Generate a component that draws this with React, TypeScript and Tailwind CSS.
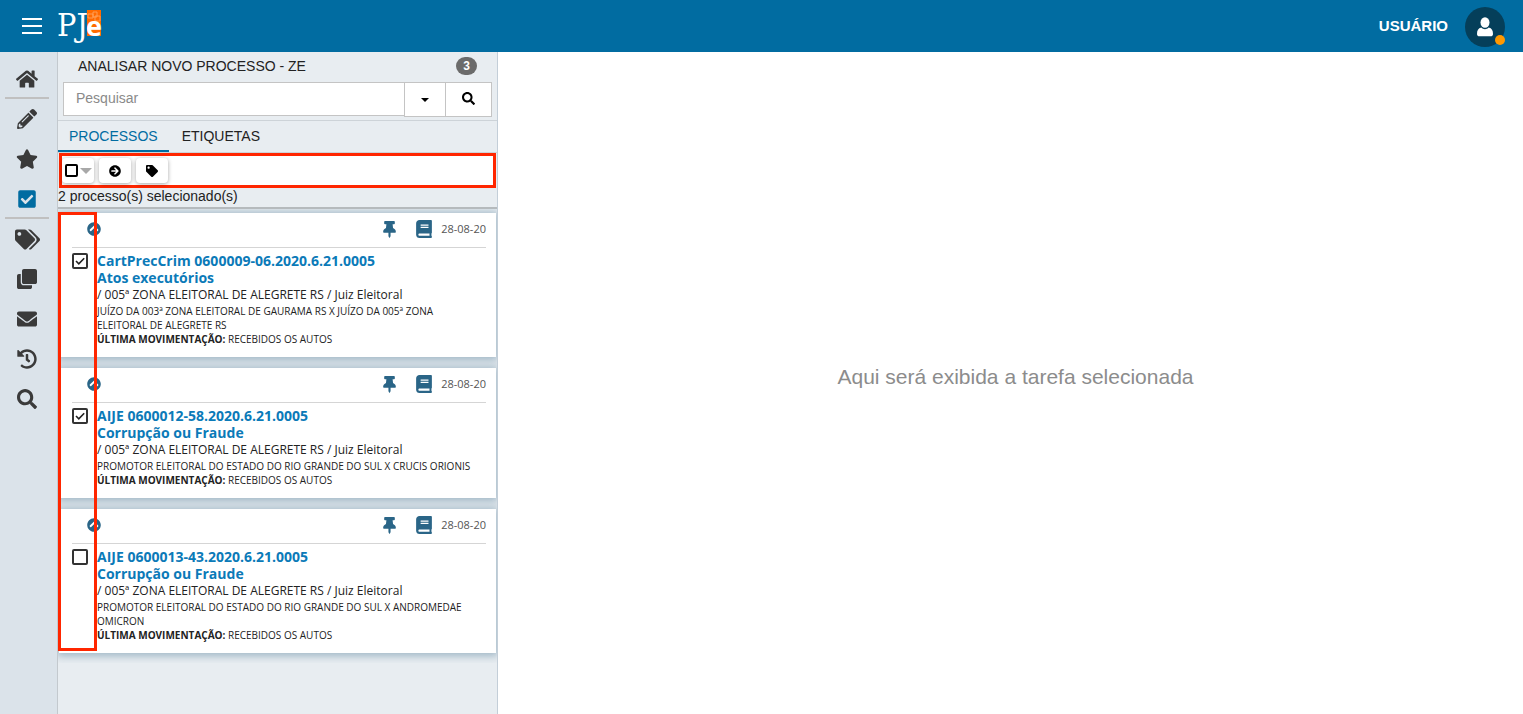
import { useState } from 'react';
import {
  FaArrowCircleRight,
  FaBook,
  FaCheckSquare,
  FaChevronCircleUp,
  FaClone,
  FaEnvelope,
  FaHistory,
  FaHome,
  FaPencilAlt,
  FaSearch,
  FaStar,
  FaTag,
  FaTags,
  FaThumbtack,
} from 'react-icons/fa';

const menuItems = [
  { label: 'Início', icon: FaHome, size: 'size-[22px]', divider: true },
  { label: 'Assinaturas', icon: FaPencilAlt, size: 'size-5' },
  { label: 'Favoritos', icon: FaStar, size: 'size-[22px]' },
  { label: 'Tarefas', icon: FaCheckSquare, size: 'size-5', active: true, divider: true },
  { label: 'Etiquetas', icon: FaTags, size: 'size-[25px]' },
  { label: 'Documentos', icon: FaClone, size: 'size-5' },
  { label: 'Mensagens', icon: FaEnvelope, size: 'size-5' },
  { label: 'Histórico', icon: FaHistory, size: 'size-5' },
  { label: 'Consulta', icon: FaSearch, size: 'size-5' },
];

type Processo = {
  numero: string;
  assunto: string;
  orgao: string;
  partes: string;
  movimentacao: string;
  data: string;
};

const processos: Processo[] = [
  {
    numero: 'CartPrecCrim 0600009-06.2020.6.21.0005',
    assunto: 'Atos executórios',
    orgao: '/ 005ª ZONA ELEITORAL DE ALEGRETE RS / Juiz Eleitoral',
    partes: 'JUÍZO DA 003ª ZONA ELEITORAL DE GAURAMA RS X JUÍZO DA 005ª ZONA ELEITORAL DE ALEGRETE RS',
    movimentacao: 'RECEBIDOS OS AUTOS',
    data: '28-08-20',
  },
  {
    numero: 'AIJE 0600012-58.2020.6.21.0005',
    assunto: 'Corrupção ou Fraude',
    orgao: '/ 005ª ZONA ELEITORAL DE ALEGRETE RS / Juiz Eleitoral',
    partes: 'PROMOTOR ELEITORAL DO ESTADO DO RIO GRANDE DO SUL X CRUCIS ORIONIS',
    movimentacao: 'RECEBIDOS OS AUTOS',
    data: '28-08-20',
  },
  {
    numero: 'AIJE 0600013-43.2020.6.21.0005',
    assunto: 'Corrupção ou Fraude',
    orgao: '/ 005ª ZONA ELEITORAL DE ALEGRETE RS / Juiz Eleitoral',
    partes: 'PROMOTOR ELEITORAL DO ESTADO DO RIO GRANDE DO SUL X ANDROMEDAE OMICRON',
    movimentacao: 'RECEBIDOS OS AUTOS',
    data: '28-08-20',
  },
];

const Logo = () => (
  <svg width="48" height="52" viewBox="0 0 48 52" role="img" aria-label="PJe">
    <rect x="30" y="10" width="14" height="26" fill="#ff6a00" />
    <path d="M31 14h5v4h-5zM36 12h4v5h-4zM38 16h5v5h-5z" fill="none" stroke="#ffa765" strokeWidth="0.8" />
    <text x="0" y="36" fontSize="32" fill="#fff" className="font-['DejaVu_Serif_Condensed','DejaVu_Serif',serif]">
      PJ
    </text>
    <text x="29" y="36" fontSize="27" fontWeight="700" fill="#fff" className="font-['Open_Sans',sans-serif]">
      e
    </text>
  </svg>
);

const Header = () => (
  <header className="flex h-[52px] shrink-0 items-center bg-[#016ca1] pr-[18px] pl-[22px] text-white">
    <button aria-label="Menu" className="flex w-5 flex-col gap-[5px]">
      <span className="h-0.5 w-full bg-white" />
      <span className="h-0.5 w-full bg-white" />
      <span className="h-0.5 w-full bg-white" />
    </button>
    <a href="#" className="ml-[15px]">
      <Logo />
    </a>
    <span className="ml-auto text-[15px] font-bold">USUÁRIO</span>
    <button aria-label="Perfil do usuário" className="relative mt-0.5 ml-[17px] flex size-10 items-center justify-center rounded-full bg-[#053f5a]">
      <svg width="16" height="20" viewBox="0 0 16 20" fill="#fff">
        <ellipse cx="8" cy="5.500" rx="4.500" ry="5.300" />
        <path d="M4.300 10.600C5.300 11.700 6.600 12.300 8 12.300s2.700-.6 3.700-1.700C14.800 11.300 16 13.500 16 17c0 1.400-1 2.300-2.300 2.300H2.300C1 19.300 0 18.400 0 17c0-3.500 1.200-5.700 4.300-6.400z" />
      </svg>
      <span className="absolute right-0 bottom-0.5 size-2.5 rounded-full bg-[#ff9800]" />
    </button>
  </header>
);

const Sidebar = () => (
  <nav className="flex w-[58px] shrink-0 flex-col border-r border-[#c3c9ce] bg-[#dbe3ea] pt-[7px] pr-2 pl-[5px]">
    {menuItems.map(({ label, icon: Icon, size, divider, active }) => (
      <a
        key={label}
        href="#"
        aria-label={label}
        className={`flex h-10 items-center justify-center border-b-2 pt-0.5 ${divider ? 'border-[#c0c0c0]' : 'border-transparent'} ${active ? 'text-[#016ca1]' : 'text-[#3a3a3a]'}`}
      >
        <Icon className={size} />
      </a>
    ))}
  </nav>
);

type CheckboxProps = {
  label: string;
  checked: boolean;
  onChange: () => void;
};

const Checkbox = ({ label, checked, onChange }: CheckboxProps) => (
  <span className="grid size-4 shrink-0 place-items-center">
    <input
      type="checkbox"
      aria-label={label}
      checked={checked}
      onChange={onChange}
      className="col-start-1 row-start-1 size-full appearance-none rounded-xs border-2 border-[#333] bg-white"
    />
    {checked && (
      <svg viewBox="0 0 12 12" className="pointer-events-none col-start-1 row-start-1 size-3" fill="none" stroke="#222" strokeWidth="1.600">
        <path d="M2 6l2.800 2.800L10.200 3.200" />
      </svg>
    )}
  </span>
);

type CardProps = {
  processo: Processo;
  checked: boolean;
  onToggle: () => void;
};

const ProcessoCard = ({ processo, checked, onToggle }: CardProps) => (
  <li className="bg-white pr-2.5 pb-[11px] pl-[13px] font-['Open_Sans',sans-serif] text-[#222] shadow-[0_1px_8px_2px_rgba(70,115,145,0.45)]">
    <div className="flex h-[35px] items-center border-b border-[#d5d5d5] pb-0.5 text-[#2a6587]">
      <button aria-label="Recolher" className="ml-[15px]">
        <FaChevronCircleUp className="size-3.5" />
      </button>
      <button aria-label="Fixar" className="ml-auto">
        <FaThumbtack className="size-[17px]" />
      </button>
      <button aria-label="Autos" className="ml-[17px]">
        <FaBook className="size-[18px]" />
      </button>
      <span className="ml-2 text-[11px] text-[#555]">{processo.data}</span>
    </div>
    <div className="flex gap-[9px] pt-1">
      <div className="pt-px">
        <Checkbox label={`Selecionar ${processo.numero}`} checked={checked} onChange={onToggle} />
      </div>
      <div className="min-w-0 flex-1 pr-1">
        <a href="#" className="block text-sm leading-[17px] font-bold text-[#0b7ab8]">
          {processo.numero}
          <br />
          {processo.assunto}
        </a>
        <p className="text-xs leading-[18px]">{processo.orgao}</p>
        <p className="text-[10px] leading-[14px]">{processo.partes}</p>
        <p className="text-[10px] leading-[14px]">
          <b>ÚLTIMA MOVIMENTAÇÃO:</b> {processo.movimentacao}
        </p>
      </div>
    </div>
  </li>
);

const toolButton = 'flex h-[25px] w-8 items-center justify-center rounded-sm bg-white text-black shadow-[0_1px_4px_rgba(0,0,0,0.35)]';

const TaskPanel = () => {
  const [selected, setSelected] = useState([true, true, false]);
  const [search, setSearch] = useState('');
  const total = selected.filter(Boolean).length;
  const all = total === selected.length;

  const toggle = (index: number) => setSelected(selected.map((value, i) => (i === index ? !value : value)));

  return (
    <section className="flex w-[440px] shrink-0 flex-col border-r border-[#c3ced8] bg-[#e8edf1] text-sm text-[#222]">
      <div className="flex h-[30px] items-center justify-between px-5 pb-0.5">
        <h1>ANALISAR NOVO PROCESSO - ZE</h1>
        <span className="rounded-full bg-[#6b6b6b] px-[7px] text-xs leading-[18px] font-bold text-white">{selected.length}</span>
      </div>

      <form className="flex border-b border-[#cdd3d8] px-[5px] pb-[3px]" onSubmit={(e) => e.preventDefault()}>
        <input
          type="text"
          aria-label="Pesquisar"
          placeholder="Pesquisar"
          value={search}
          onChange={(e) => setSearch(e.target.value)}
          className="h-[34px] min-w-0 flex-1 border border-r-0 border-[#c4c4c4] bg-white px-3 pb-0.5 placeholder:text-[#8a8a8a]"
        />
        <button type="button" aria-label="Filtros" className="flex h-[35px] w-[42px] items-center justify-center border border-[#c4c4c4] bg-white text-black">
          <svg width="8" height="4" viewBox="0 0 8 4" fill="currentColor">
            <path d="M0 0h8L4 4z" />
          </svg>
        </button>
        <button aria-label="Buscar" className="flex h-[35px] w-[46px] items-center justify-center border border-l-0 border-[#c4c4c4] bg-white pb-0.5 text-black">
          <FaSearch className="size-[13px]" />
        </button>
      </form>

      <div role="tablist" className="flex h-8 border-b border-[#cdd3d8]">
        <button role="tab" aria-selected="true" className="border-b-2 border-[#016ca1] px-[11px] text-[#016ca1]">
          PROCESSOS
        </button>
        <button role="tab" aria-selected="false" className="border-b-2 border-transparent px-[13px]">
          ETIQUETAS
        </button>
      </div>

      <div className="mr-px ml-px flex h-[35px] items-center gap-[5px] border-3 border-[#ff2600] bg-white">
        <div className="flex h-[25px] w-8 items-center justify-center rounded-sm bg-white shadow-[0_1px_4px_rgba(0,0,0,0.35)]">
          <input
            type="checkbox"
            aria-label="Selecionar todos"
            checked={all}
            onChange={() => setSelected(selected.map(() => !all))}
            className="mr-0.5 size-[13px] appearance-none rounded-xs border-2 border-black checked:bg-black"
          />
          <button aria-label="Opções de seleção" className="text-[#a8a8a8]">
            <svg width="12" height="6" viewBox="0 0 12 6" fill="currentColor">
              <path d="M0 0h12L6 6z" />
            </svg>
          </button>
        </div>
        <button aria-label="Encaminhar" className={toolButton}>
          <FaArrowCircleRight className="size-3" />
        </button>
        <button aria-label="Etiquetar" className={toolButton}>
          <FaTag className="size-3" />
        </button>
      </div>
      <p className="border-b-2 border-[#b5babd] pb-0.5 leading-[17px]">{total} processo(s) selecionado(s)</p>

      <div className="relative overflow-hidden pb-2.5">
        <ul className="flex flex-col gap-[11px] px-px pt-1">
          {processos.map((processo, index) => (
            <ProcessoCard key={processo.numero} processo={processo} checked={selected[index]} onToggle={() => toggle(index)} />
          ))}
        </ul>
        {/* highlight over the selection column */}
        <div className="pointer-events-none absolute top-[3px] bottom-3 left-0 w-[39px] border-3 border-[#ff2600]" />
      </div>
    </section>
  );
};

export default function App() {
  return (
    <div className="flex min-h-screen flex-col bg-white font-['Liberation_Sans',Arial,sans-serif]">
      <Header />
      <div className="flex flex-1">
        <Sidebar />
        <TaskPanel />
        <main className="flex flex-1 items-center justify-center pb-3 pl-2.5">
          <p className="text-[21px] text-[#8c8c8c]">Aqui será exibida a tarefa selecionada</p>
        </main>
      </div>
    </div>
  );
}
